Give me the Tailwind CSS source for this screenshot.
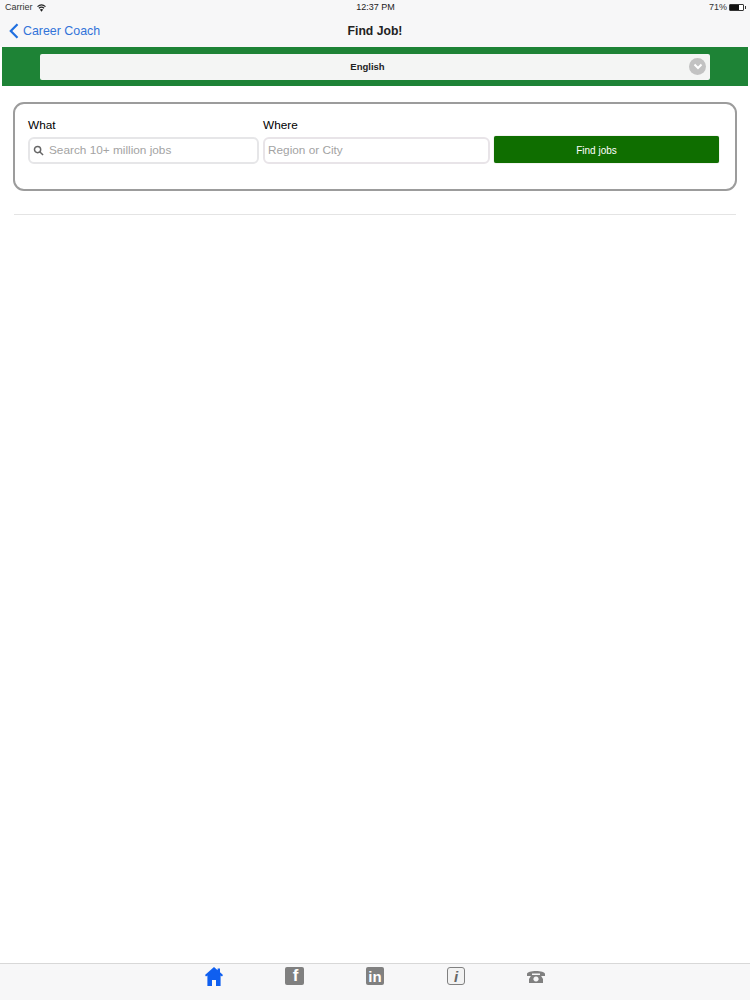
<!DOCTYPE html>
<html lang="en">
<head>
    <meta charset="UTF-8">
    <title>Find Job!</title>
    <script src="https://cdn.jsdelivr.net/npm/@tailwindcss/browser@4"></script>
</head>
<body class="bg-white font-['Liberation_Sans',Arial,sans-serif] text-black">
<div class="w-[750px] h-[1000px] flex flex-col overflow-hidden">
    <!-- status bar + nav -->
    <div class="bg-[#f7f7f8] h-[47px] shrink-0">
        <div class="h-[15px] flex items-center justify-between pl-[5px] pr-[4px] text-[9px] leading-none text-[#333]">
            <div class="flex-1 flex items-center gap-[4px]">
                <span>Carrier</span>
                <svg width="9" height="8" viewBox="0 0 9 8" fill="none" stroke="#222" stroke-width="1.2"><path d="M0.5 2.6 Q4.5 -0.8 8.5 2.6"/><path d="M1.9 4.2 Q4.5 2 7.1 4.2"/><path d="M4.5 7.8 L2.8 5.6 Q4.5 4.6 6.2 5.6 Z" fill="#222" stroke="none"/></svg>
            </div>
            <div class="text-[#222]">12:37 PM</div>
            <div class="flex-1 flex items-center justify-end gap-[2px]">
                <span>71%</span>
                <div class="w-[15px] h-[7px] border border-[#333] rounded-[1px] bg-[linear-gradient(90deg,#111_71%,#fff_71%)]"></div>
                <div class="w-[1px] h-[3px] ml-[-1px] bg-[#333]"></div>
            </div>
        </div>
        <div class="relative h-[32px] flex items-center justify-center">
            <a class="absolute left-[9px] top-[7px] flex items-center gap-[4px] text-[#3273d8] text-[12.4px] leading-[18px]">
                <svg width="10" height="16" viewBox="0 0 10 16" fill="none" stroke="#1f6fe0" stroke-width="2.2"><path d="M8.5 1.2 L1.8 8 L8.5 14.8"/></svg>
                <span>Career Coach</span>
            </a>
            <div class="text-[12.2px] font-bold text-[#222]">Find Job!</div>
        </div>
    </div>

    <!-- language picker -->
    <div class="mx-[2px] h-[39px] shrink-0 bg-[#1e8336] pl-[38px] pr-[38px] flex items-center">
        <div class="relative w-[670px] h-[26px] bg-[#f4f5f4] rounded-[2px] flex items-center justify-center pr-[15px] pt-[1px] text-[9.5px] font-bold text-[#222]">
            English
            <div class="absolute right-[4px] top-[4px] w-[17px] h-[17px] rounded-full bg-[#c2c2c2] flex items-center justify-center">
                <svg width="10" height="7" viewBox="0 0 10 7" fill="none" stroke="#fff" stroke-width="2"><path d="M1.5 1.5 L5 5 L8.5 1.5"/></svg>
            </div>
        </div>
    </div>

    <!-- search form -->
    <div class="mt-[16px] mx-[13px] h-[89px] shrink-0 border-2 border-[#9c9c9c] rounded-[11px] pt-[11px] pl-[13px]">
        <div class="flex gap-[4px]">
            <div class="w-[231px]">
                <div class="text-[11.8px] leading-[20px] mb-[2px]">What</div>
                <div class="h-[27px] border-2 border-[#e6e6e8] rounded-[6px] flex items-center pl-[3px] pt-[1px] text-[11.8px] text-[#a3a3a3]">
                    <svg class="mr-[5px] mt-[-2px]" width="11" height="11" viewBox="0 0 12 12" fill="none" stroke="#666" stroke-width="1.6"><circle cx="5" cy="5" r="3.4"/><path d="M7.6 7.6 L11 11"/></svg>
                    Search 10+ million jobs
                </div>
            </div>
            <div class="w-[227px]">
                <div class="text-[11.8px] leading-[20px] mb-[2px]">Where</div>
                <div class="h-[27px] border-2 border-[#e8e4e8] rounded-[6px] flex items-center pl-[3px] pt-[1px] text-[11.8px] text-[#a3a3a3]">Region or City</div>
            </div>
            <button class="w-[225px] h-[27px] mt-[21px] bg-[#0f6e00] rounded-[2px] pr-[20px] pt-[1px] text-[10px] text-white shadow-[0_0_1px_#7a9a70]">Find jobs</button>
        </div>
    </div>

    <hr class="mt-[23px] mx-[14px] border-t border-[#e4e4e4] shrink-0">

    <div class="flex-1"></div>

    <!-- tab bar -->
    <div class="h-[37px] shrink-0 bg-[#f7f7f8] border-t border-[#d8d8d8] flex pl-[205px] pt-[3px]">
        <div class="w-[80px]">
            <svg width="18" height="19" viewBox="0 0 18 19" fill="#0f5ff0"><path d="M9 0 L12.6 3.2 V1.6 H15 V5.3 L18 8 L17 9.6 L15.6 8.6 V19 H11 V13 H7 V19 H2.4 V8.6 L1 9.6 L0 8 Z"/></svg>
        </div>
        <div class="w-[81px]">
            <div class="w-[19px] h-[18px] rounded-[2px] bg-[#808080] flex items-center justify-center text-white font-bold text-[17px] leading-[18px] pl-[2px]">f</div>
        </div>
        <div class="w-[81px]">
            <div class="w-[18px] h-[18px] rounded-[2px] bg-[#808080] flex items-center justify-center text-white font-bold text-[15px] leading-none">in</div>
        </div>
        <div class="w-[80px]">
            <div class="w-[18px] h-[18px] rounded-[3px] border border-[#808080] bg-[#f2f2f2] flex items-center justify-center text-[#666] italic font-bold text-[15px] leading-none">i</div>
        </div>
        <div class="w-[20px] pt-[3px]">
            <svg width="18" height="13" viewBox="0 0 18 13" fill="#808080"><path d="M0 4 C0 0 18 0 18 4 V6 H13 V3.6 H5 V6 H0 Z"/><path d="M4.5 5 H13.5 L16 9 V13 H2 V9 Z M9 6.4 A2.6 2.6 0 1 0 9.01 6.4 Z" fill-rule="evenodd"/></svg>
        </div>
    </div>
</div>
</body>
</html>
